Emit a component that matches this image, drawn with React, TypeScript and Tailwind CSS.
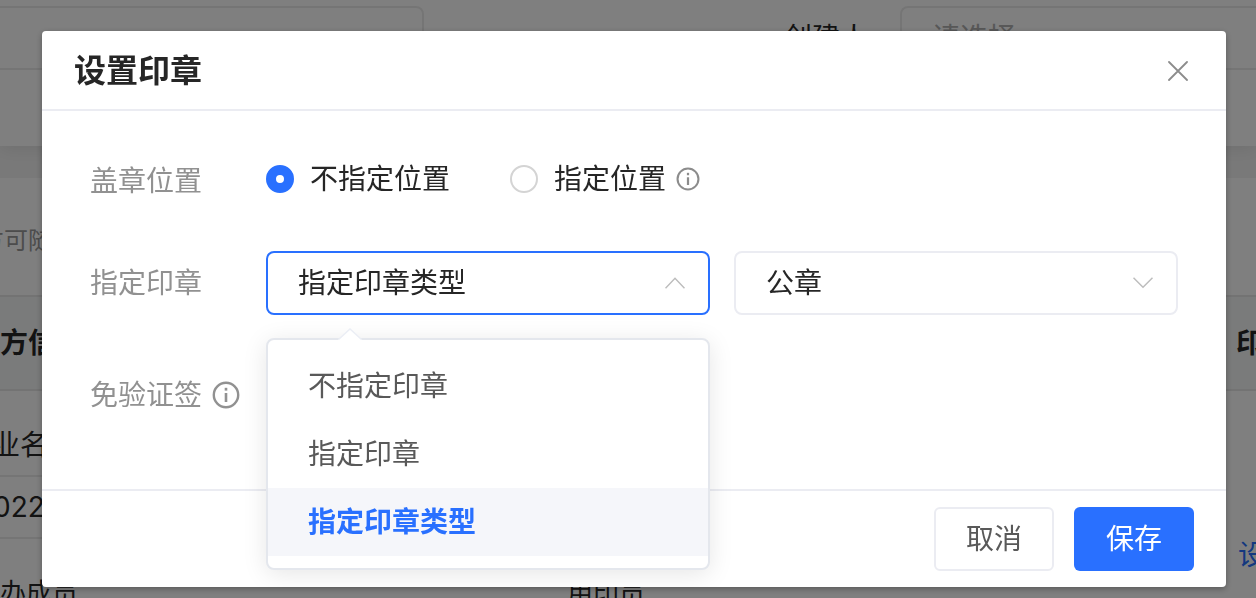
import React, { useState } from "react";

const SEAL_MODES = ["不指定印章", "指定印章", "指定印章类型"];
const SEAL_TYPES = ["公章", "合同章", "财务专用章"];

const InfoIcon: React.FC<{ className: string }> = ({ className }) => (
  <svg viewBox="0 0 28 28" className={className} fill="none" aria-hidden="true">
    <circle cx="14" cy="14" r="12.2" stroke="currentColor" strokeWidth="2.4" />
    <rect x="12.7" y="6.8" width="2.6" height="2.8" fill="currentColor" />
    <rect x="12.7" y="12" width="2.6" height="9" fill="currentColor" />
  </svg>
);

const Chevron: React.FC<{ open?: boolean }> = ({ open = false }) => (
  <svg
    viewBox="0 0 20 12"
    className="pointer-events-none absolute top-[26px] right-[25px] h-3 w-5 text-[#bdbdbd]"
    fill="none"
    stroke="currentColor"
    strokeWidth="1.5"
    aria-hidden="true"
  >
    <path d={open ? "M0.5 11.3 10 1.3 19.5 11.3" : "M0.5 0.7 10 10.2 19.5 0.7"} />
  </svg>
);

// Page behind the dialog
const ContractPage: React.FC = () => (
  <div className="bg-[#f3f3f3] text-[28px] leading-10 text-[#262626]">
    <section className="bg-white pt-[6px] pb-[76px] shadow-[0_4px_16px_rgba(0,0,0,0.08)]">
      <div className="flex items-center">
        <div className="h-16 w-[424px] rounded-r-lg border-2 border-l-0 border-[#ebebeb]" />
        <div className="flex-1 pr-8 text-right">创建人</div>
        <div className="h-16 w-[356px] rounded-l-lg border-2 border-r-0 border-[#ebebeb] px-[30px] leading-[60px] text-[#b0b0b0]">
          请选择
        </div>
      </div>
    </section>

    <section className="mt-8 bg-white">
      <p className="-ml-5 pt-[43px] pb-[34px] text-[24px] text-[#999999]">方可随时查看</p>
      <div className="flex h-24 items-center justify-between border-y-2 border-[#e6e6e6] bg-[#f5f7f6] font-bold">
        <span>方信息</span>
        <span className="w-5 whitespace-nowrap">印章</span>
      </div>
      <div className="flex">
        <div className="mr-12 flex-1">
          <div className="-ml-2 flex h-[86px] items-center border-b-2 border-[#ebebeb] pt-6">业名</div>
          <div className="-ml-6 flex h-[62px] items-center border-b-2 border-[#ebebeb]">2022</div>
        </div>
        <div className="flex h-[210px] w-[18px] items-center pt-[118px] whitespace-nowrap text-[#2970ff]">设置</div>
      </div>
    </section>
  </div>
);

const SignerRow: React.FC = () => (
  <div className="-mt-[62px] mr-12 flex h-[110px] bg-white pt-[34px] text-[26px] leading-10 text-[#262626]">
    <span className="w-[567px]">办成员</span>
    <span>用印员</span>
  </div>
);

interface SealModeSelectProps {
  value: string;
  onChange: (value: string) => void;
}

const SealModeSelect: React.FC<SealModeSelectProps> = ({ value, onChange }) => {
  const [open, setOpen] = useState(true);

  const choose = (mode: string) => {
    onChange(mode);
    setOpen(false);
  };

  return (
    <div className="relative min-w-0 flex-1">
      <select
        id="seal-mode"
        value={value}
        onChange={(e) => onChange(e.target.value)}
        onMouseDown={(e) => {
          e.preventDefault();
          setOpen(!open);
        }}
        className={`h-16 w-full cursor-pointer appearance-none rounded-lg border-2 bg-white px-[30px] text-[#262626] outline-none ${
          open ? "border-[#2970ff]" : "border-[#ebecf2]"
        }`}
      >
        {SEAL_MODES.map((mode) => (
          <option key={mode}>{mode}</option>
        ))}
      </select>
      <Chevron open={open} />

      {open && (
        <div className="absolute inset-x-0 top-full z-10 mt-[23px] rounded-lg border-2 border-[#e4e7ed] bg-white py-3 shadow-[0_4px_24px_rgba(0,0,0,0.1)]">
          <svg viewBox="0 0 24 14" className="absolute -top-3 left-[70px] h-[14px] w-6" aria-hidden="true">
            <path d="M0 12 12 1 24 12V14H0Z" fill="#fff" />
            <path d="M0.5 11.5 12 1 23.5 11.5" fill="none" stroke="#ebeef5" strokeWidth="1.5" />
          </svg>
          <ul>
            {SEAL_MODES.map((mode) => (
              <li key={mode}>
                <button
                  type="button"
                  onClick={() => choose(mode)}
                  className={`block h-[68px] w-full px-10 text-left ${
                    mode === value ? "bg-[#f5f6fa] font-bold text-[#2970ff]" : "text-[#595959]"
                  }`}
                >
                  {mode}
                </button>
              </li>
            ))}
          </ul>
        </div>
      )}
    </div>
  );
};

const radioClass =
  "size-7 shrink-0 appearance-none rounded-full border-2 border-[#d4d4d4] bg-white checked:border-[10px] checked:border-[#2970ff]";

const SealDialog: React.FC = () => {
  const [position, setPosition] = useState("none");
  const [mode, setMode] = useState("指定印章类型");
  const [type, setType] = useState("公章");

  return (
    <div
      role="dialog"
      aria-labelledby="dialog-title"
      className="mt-[31px] mr-[30px] ml-[42px] rounded bg-white text-[28px] leading-10 text-[#262626] shadow-[0_2px_6px_rgba(0,0,0,0.3)]"
    >
      <header className="flex h-20 items-center justify-between border-b-2 border-[#ebecf2] pt-0.5 pr-[30px] pl-8">
        <h2 id="dialog-title" className="text-[32px] font-bold">设置印章</h2>
        <button type="button" aria-label="关闭" className="flex size-9 items-center justify-center text-[#8c8c8c]">
          <svg viewBox="0 0 20 20" className="size-5" fill="none" stroke="currentColor" strokeWidth="1.8" strokeLinecap="round">
            <path d="M1 1 19 19M19 1 1 19" />
          </svg>
        </button>
      </header>

      <div className="px-12 pt-9 pb-[62px]">
        <div className="mb-10 flex h-16 items-center">
          <span className="w-44 pt-1 text-[#919191]">盖章位置</span>
          <label className="mr-[60px] flex items-center gap-4">
            <input
              type="radio"
              name="position"
              className={radioClass}
              checked={position === "none"}
              onChange={() => setPosition("none")}
            />
            不指定位置
          </label>
          <label className="flex items-center gap-4">
            <input
              type="radio"
              name="position"
              className={radioClass}
              checked={position === "fixed"}
              onChange={() => setPosition("fixed")}
            />
            指定位置
          </label>
          <InfoIcon className="ml-[10px] size-6 text-[#8c8c8c]" />
        </div>

        <div className="mb-12 flex items-center">
          <label htmlFor="seal-mode" className="w-44 text-[#919191]">指定印章</label>
          <div className="flex min-w-0 flex-1 gap-6">
            <SealModeSelect value={mode} onChange={setMode} />
            <div className="relative min-w-0 flex-1">
              <select
                aria-label="印章类型"
                value={type}
                onChange={(e) => setType(e.target.value)}
                className="h-16 w-full appearance-none rounded-lg border-2 border-[#ebecf2] bg-white px-[30px] text-[#262626] outline-none"
              >
                {SEAL_TYPES.map((item) => (
                  <option key={item}>{item}</option>
                ))}
              </select>
              <Chevron />
            </div>
          </div>
        </div>

        <div className="flex h-16 items-center text-[#919191]">
          <span>免验证签</span>
          <InfoIcon className="ml-[10px] size-7" />
        </div>
      </div>

      <footer className="flex justify-end gap-5 border-t-2 border-[#ebecf2] py-4 pr-8">
        <button type="button" className="h-16 w-[120px] rounded-md border-2 border-[#ebecf2] text-[#595959]">
          取消
        </button>
        <button type="button" className="h-16 w-[120px] rounded-md bg-[#2970ff] text-white">
          保存
        </button>
      </footer>
    </div>
  );
};

const App: React.FC = () => (
  <div className="h-screen overflow-hidden font-[Inter,'Noto_Sans_CJK_SC',sans-serif]">
    <ContractPage />
    <SignerRow />
    <div className="fixed inset-0 bg-black/50">
      <SealDialog />
    </div>
  </div>
);

export default App;
